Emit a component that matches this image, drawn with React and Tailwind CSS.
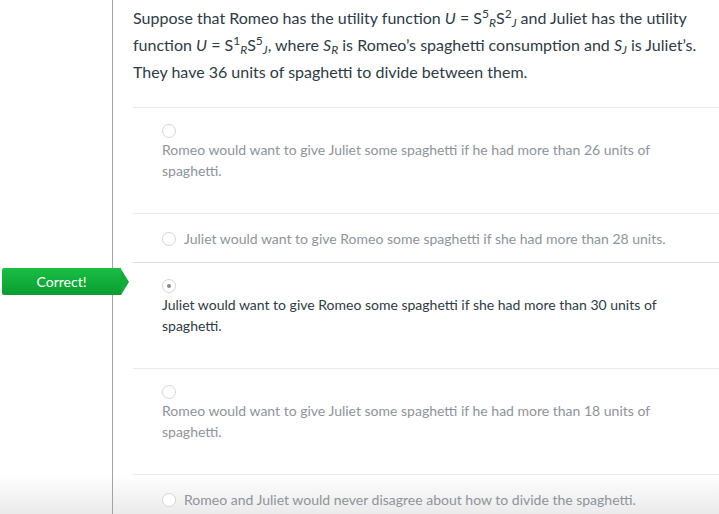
import React from 'react';

const Radio = ({ checked }) => (
  <span className="inline-flex items-center justify-center w-[14px] h-[14px] rounded-full border border-[#d6d6d6] bg-white shrink-0">
    {checked && <span className="w-[4px] h-[4px] rounded-full bg-[#8a8a8a]" />}
  </span>
);

const answers = [
  {
    text: 'Romeo would want to give Juliet some spaghetti if he had more than 26 units of spaghetti.',
    wrap: true,
  },
  {
    text: 'Juliet would want to give Romeo some spaghetti if she had more than 28 units.',
    wrap: false,
  },
  {
    text: 'Juliet would want to give Romeo some spaghetti if she had more than 30 units of spaghetti.',
    wrap: true,
    selected: true,
  },
  {
    text: 'Romeo would want to give Juliet some spaghetti if he had more than 18 units of spaghetti.',
    wrap: true,
  },
  {
    text: 'Romeo and Juliet would never disagree about how to divide the spaghetti.',
    wrap: false,
  },
];

const App = () => {
  return (
    <div className="relative w-[719px] h-[514px] overflow-hidden bg-white font-['Lato','Noto_Sans',sans-serif]">
      {/* bottom fade (behind content) */}
      <div className="pointer-events-none absolute bottom-0 left-0 right-0 h-[40px] bg-gradient-to-b from-white to-[#ebebeb]" />

      <div className="relative flex h-full">
        <div className="w-[112px] shrink-0" />
        <div className="flex-1 border-l border-[#a3a3a3] pl-[20px]">
          {/* Question */}
          <div className="pt-[4px] pr-[14px] text-[16px] leading-[27px] text-[#2d3b45]">
            Suppose that Romeo has the utility function <i>U</i> = S<sup>5</sup><sub><i>R</i></sub>S<sup>2</sup><sub><i>J</i></sub> and Juliet has the utility
            function <i>U</i> = S<sup>1</sup><sub><i>R</i></sub>S<sup>5</sup><sub><i>J</i></sub>, where <i>S<sub>R</sub></i> is Romeo’s spaghetti consumption and <i>S<sub>J</sub></i> is Juliet’s.
            They have 36 units of spaghetti to divide between them.
          </div>

          {/* Answers */}
          <div className="mt-[22px]">
            {answers.map((a, i) => (
              <div
                key={i}
                className={`border-t ${i === 2 ? 'border-[#dcdcdc]' : 'border-[#ebebeb]'} pl-[29px] pr-[40px] text-[14px] leading-[21px] ${a.selected ? 'text-[#2d3b45]' : 'text-[#8d949a]'}`}
              >
                {a.wrap ? (
                  <div className="pt-[16px] pb-[32px]">
                    <div className="flex">
                      <Radio checked={a.selected} />
                    </div>
                    <div className="mt-[1px]">{a.text}</div>
                  </div>
                ) : (
                  <div className="flex items-center gap-[8px] pt-[14px] pb-[13px]">
                    <Radio />
                    <span>{a.text}</span>
                  </div>
                )}
              </div>
            ))}
          </div>
        </div>
      </div>

      {/* Correct! badge */}
      <div className="absolute left-[2px] top-[268px] flex h-[27px] items-center">
        <div className="flex h-full w-[119px] items-center justify-center rounded-l-[2px] bg-gradient-to-b from-[#19bf44] to-[#0a9c30] text-[14px] text-white">
          Correct!
        </div>
        <div className="h-0 w-0 border-y-[13.5px] border-l-[8px] border-y-transparent border-l-[#11ad3a]" />
      </div>
    </div>
  );
};

export default App;
